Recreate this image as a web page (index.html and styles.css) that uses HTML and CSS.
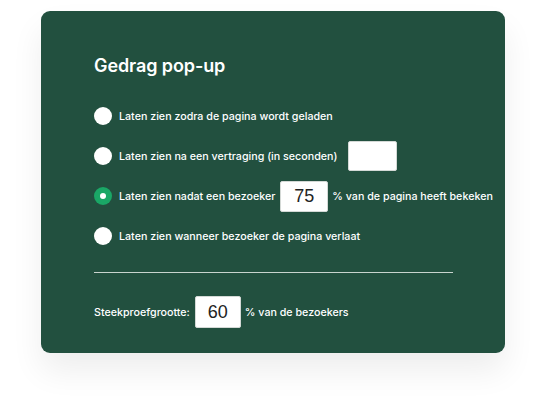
FILE: index.html
```html
<!DOCTYPE html>
<html lang="nl">
<head>
<meta charset="utf-8">
<title>Gedrag pop-up</title>
<link rel="stylesheet" href="styles.css">
</head>
<body>
<div class="card">
  <h2 class="title">Gedrag pop-up</h2>
  <div class="options">
    <div class="row"><span class="radio"></span><span class="label">Laten zien zodra de pagina wordt geladen</span></div>
    <div class="row"><span class="radio"></span><span class="label">Laten zien na een vertraging (in seconden)</span><span class="field field-wide"></span></div>
    <div class="row"><span class="radio radio-on"></span><span class="label">Laten zien nadat een bezoeker</span><span class="field">75</span><span class="label">% van de pagina heeft bekeken</span></div>
    <div class="row"><span class="radio"></span><span class="label">Laten zien wanneer bezoeker de pagina verlaat</span></div>
  </div>
  <hr class="divider">
  <div class="sample"><span class="label">Steekproefgrootte:</span><span class="field field-small">60</span><span class="label">% van de bezoekers</span></div>
</div>
</body>
</html>
```
FILE: styles.css
```css
* { box-sizing: border-box; }
html, body { margin: 0; padding: 0; background: #ffffff; }
body {
  width: 547px;
  height: 400px;
  overflow: hidden;
  font-family: "Inter", "Liberation Sans", sans-serif;
  padding: 11px 0 0 41px;
}
.card {
  width: 464px;
  height: 342px;
  background: #22503f;
  border-radius: 9px;
  padding: 43px 0 0 53px;
  box-shadow: 0 18px 32px rgba(0, 0, 0, 0.07);
  color: #ffffff;
}
.title {
  margin: 0;
  font-size: 18px;
  line-height: 24px;
  font-weight: 600;
  letter-spacing: -0.1px;
}
.options {
  margin-top: 18px;
  display: flex;
  flex-direction: column;
}
.row {
  height: 40px;
  display: flex;
  align-items: center;
}
.radio {
  width: 18px;
  height: 18px;
  border-radius: 50%;
  background: #ffffff;
  flex: none;
  margin-right: 7px;
  display: flex;
  align-items: center;
  justify-content: center;
}
.radio-on { background: #1aa766; }
.radio-on::after {
  content: "";
  width: 6px;
  height: 6px;
  border-radius: 50%;
  background: #ffffff;
}
.label {
  font-size: 10.7px;
  font-weight: 500;
  white-space: nowrap;
}
.field {
  width: 48px;
  height: 31px;
  background: #ffffff;
  border: 1px solid #d4d9d6;
  border-radius: 2px;
  color: #222222;
  font-family: "Liberation Sans", sans-serif;
  font-size: 18px;
  display: flex;
  align-items: center;
  justify-content: center;
  margin: 0 4px 0 5px;
}
.field-wide { width: 49px; height: 30px; margin-left: 11px; }
.field-small { width: 46px; height: 32px; }
.divider {
  width: 359px;
  margin: 16px 0 0 0;
  border: 0;
  border-top: 1.5px solid #c9d4ce;
}
.sample {
  margin-top: 23px;
  height: 32px;
  display: flex;
  align-items: center;
}
```
